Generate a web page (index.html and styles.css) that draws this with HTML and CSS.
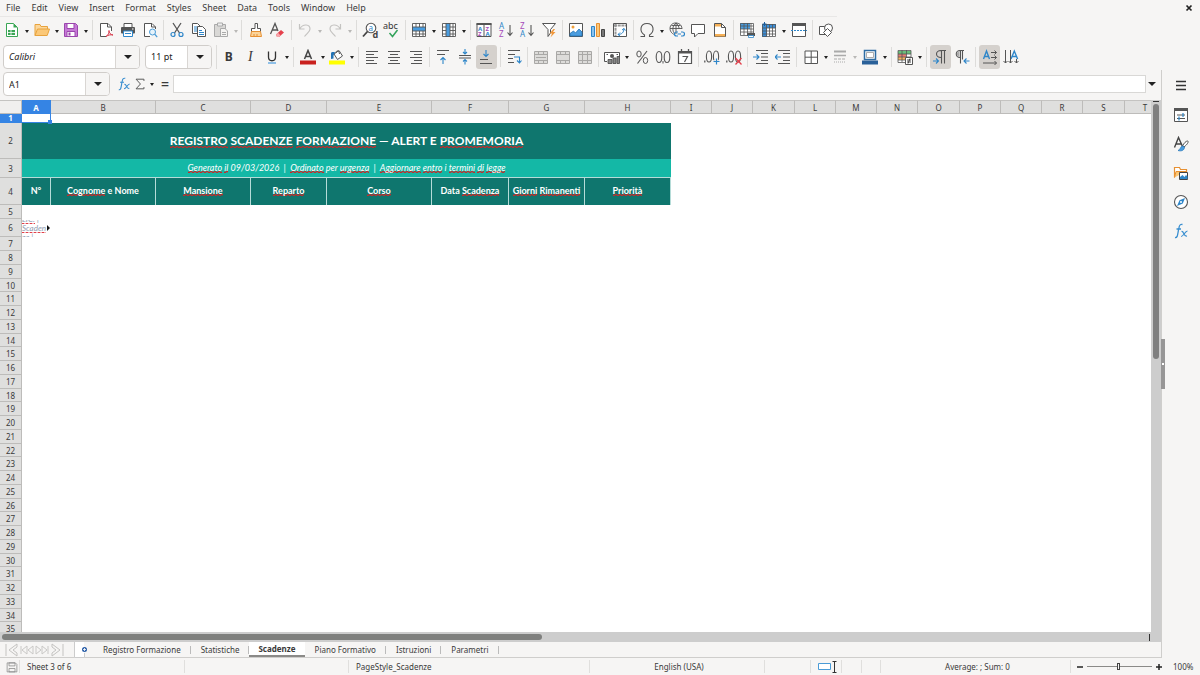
FILE: index.html
```html
<!DOCTYPE html>
<html lang="en">
<head>
<meta charset="utf-8">
<title>Scadenze</title>
<link rel="stylesheet" href="styles.css">
</head>
<body>
<svg class="defs" aria-hidden="true">
  <symbol id="new" viewBox="0 0 16 16"><path d="M2.500 1.500h7l4 4v9h-11z" fill="#fff" stroke="#3aa655"/><path d="M9.500 1.500v4h4z" fill="#3aa655"/><path d="M4 8h7v5H4z" fill="#3aa655"/><path d="M4 10.500h7M7 8v5" stroke="#fff" stroke-width=".8"/></symbol>
  <symbol id="open" viewBox="0 0 16 16"><path d="M1 13.500v-11h5l1 2h6.500v3" fill="#fcd79b" stroke="#e8a33d"/><path d="M1 13.500l2.500-6.500h12l-2.300 6.500z" fill="#fbc878" stroke="#e8a33d"/></symbol>
  <symbol id="save" viewBox="0 0 16 16"><path d="M1.500 1.500h11l2 2v11h-13z" fill="#c67ad6" stroke="#9b46ad"/><path d="M4 1.500h7v5H4z" fill="#fff" stroke="#9b46ad"/><path d="M4 9.500h8v5H4z" fill="#fff" stroke="#9b46ad"/><path d="M5.500 10.500h2v3h-2z" fill="#9b46ad"/></symbol>
  <symbol id="pdf" viewBox="0 0 16 16"><path d="M13.500 9V5L10 1.500H2.500v13H8" fill="#fff" stroke="#555"/><path d="M9.500 1.500V5h4" fill="none" stroke="#555"/><path d="M8 14.500c2-1 3.500-4 3-6-.6 2 2 4.500 4 4.500-2-.6-5 0-7 1.500z" fill="none" stroke="#d8394b"/></symbol>
  <symbol id="print" viewBox="0 0 16 16"><path d="M4 1.500h8v4H4z" fill="#fff" stroke="#555"/><rect x="1" y="5" width="14" height="6.500" rx="1" fill="#555"/><path d="M3.500 9h9v5.500h-9z" fill="#fff" stroke="#2e86c9"/><path d="M5 11.500h6" stroke="#2e86c9"/><path d="M12 7h1.500" stroke="#fff"/></symbol>
  <symbol id="preview" viewBox="0 0 16 16"><path d="M13.500 7V5L10 1.500H2.500v13H8" fill="#fff" stroke="#555"/><path d="M9.500 1.500V5h4" fill="none" stroke="#555"/><circle cx="10.500" cy="10" r="3" fill="#e6f3fb" stroke="#4a9bd6"/><path d="M12.700 12.200l2.500 3" stroke="#4a9bd6" stroke-width="1.300"/></symbol>
  <symbol id="cut" viewBox="0 0 16 16"><path d="M4 1l6.500 10M12 1L5.500 11" stroke="#555" stroke-width="1.300"/><circle cx="4" cy="12.500" r="2" fill="none" stroke="#2e86c9" stroke-width="1.200"/><circle cx="12" cy="12.500" r="2" fill="none" stroke="#2e86c9" stroke-width="1.200"/></symbol>
  <symbol id="copy" viewBox="0 0 16 16"><path d="M1.500 1.500h5l3 3v7h-8z" fill="#fff" stroke="#555"/><path d="M3 5h3M3 7h3M3 9h3" stroke="#2e86c9"/><path d="M6.500 4.500h5l3 3v7h-8z" fill="#fff" stroke="#555"/><path d="M8 8.500h3M8 10.500h5M8 12.500h5" stroke="#2e86c9"/></symbol>
  <symbol id="paste" viewBox="0 0 16 16"><path d="M1.500 2.500h11v12h-11z" fill="#d9d8d6" stroke="#aaa"/><path d="M4.500 1h5v3h-5z" fill="#eee" stroke="#aaa"/><path d="M7.500 6.500H12l2.500 2.500v5.500h-7z" fill="#f5f4f2" stroke="#aaa"/><path d="M9 10.500h4M9 12.500h4" stroke="#aaa"/></symbol>
  <symbol id="brush" viewBox="0 0 16 16"><path d="M7 1.500h2.500v5h3v3h-9v-3H7z" fill="#fff" stroke="#555"/><path d="M3.500 9.500h9l1 5h-11z" fill="#fbd49a" stroke="#e79032"/><path d="M6 12v2.500M9 12v2.500" stroke="#e79032"/></symbol>
  <symbol id="clear" viewBox="0 0 16 16"><path d="M1.500 12L6 1.500 9 9M3.500 8h5" fill="none" stroke="#555" stroke-width="1.300"/><path d="M7 12.500l5-4.500 3 2.500-5 4.500H8z" fill="#e5404c"/><path d="M7 12.500l2-1.700 2.500 2.700L10 15H8z" fill="#f7a6ab"/></symbol>
  <symbol id="undo" viewBox="0 0 16 16"><path d="M2.500 2v5h5M3 6.500C6 1.500 13 2 13 7c0 3-3 4-5.500 7.500" fill="none" stroke="#c4c3c1" stroke-width="1.200"/></symbol>
  <symbol id="redo" viewBox="0 0 16 16"><path d="M13.500 2v5h-5M13 6.500C10 1.500 3 2 3 7c0 3 3 4 5.500 7.500" fill="none" stroke="#c4c3c1" stroke-width="1.200"/></symbol>
  <symbol id="row" viewBox="0 0 16 16"><path d="M1.500 1.500h13v13h-13z" fill="#fff"/><path d="M1 5h14v4H1z" fill="#4a9de0"/><path d="M1.500 1.500h13v13h-13zM1.500 5h13M1.500 9h13M1.500 12h13M5 1v4M8.500 1v4M12 1v4M5 9v5M8.500 9v5M12 9v5" fill="none" stroke="#555" stroke-width=".9"/></symbol>
  <symbol id="col" viewBox="0 0 16 16"><path d="M1.500 1.500h13v13h-13z" fill="#fff"/><path d="M5 1h4v14H5z" fill="#4a9de0"/><path d="M1.500 1.500h13v13h-13zM5 1v14M9 1v14M12 1v14M1 5h4M1 8.500h4M1 12h4M9 5h5M9 8.500h5M9 12h5" fill="none" stroke="#555" stroke-width=".9"/></symbol>
  <symbol id="filter" viewBox="0 0 16 16"><path d="M1.500 1.500h13l-5 6V11L7 14.500v-7z" fill="#fff" stroke="#555"/><path d="M12.500 7L8.500 11.500h2.500l-1.500 4 5-5.500h-2.500l2-3z" fill="#f0973a"/></symbol>
  <symbol id="image" viewBox="0 0 16 16"><path d="M1.500 1.500h13v13h-13z" fill="#fff" stroke="#555"/><circle cx="5" cy="5" r="1.500" fill="#f0a03a"/><path d="M2 14v-2.500L5.500 9l2 2 3.500-4 3 3v4z" fill="#4a9de0" stroke="#2272b4" stroke-width=".8"/></symbol>
  <symbol id="chart" viewBox="0 0 16 16"><path d="M1.500 4.500h3v10h-3z" fill="#8cc3ee" stroke="#2e86c9"/><path d="M6.500 1.500h3v13h-3z" fill="#fbc878" stroke="#e79032"/><path d="M11.500 7.500h3v7h-3z" fill="#777" stroke="#444"/></symbol>
  <symbol id="pivot" viewBox="0 0 16 16"><path d="M1.500 1.500h13v13h-13z" fill="#fff" stroke="#555"/><path d="M2 3.500h12M3.500 2v12" stroke="#999" stroke-width="2" stroke-dasharray="3 .7"/><path d="M6 12.500c3.500 0 6-2 6-6M6 12.500l2-2M6 12.500l2 1.500M12 6.500l-2 1.500M12 6.500l1.500 2" fill="none" stroke="#2e86c9"/></symbol>
  <symbol id="omega" viewBox="0 0 16 16"><path d="M1.500 14.500h4V13C0 9.500 1 1.500 8 1.500s8 8 2.500 11.500v1.500h4" fill="none" stroke="#555" stroke-width="1.100"/></symbol>
  <symbol id="link" viewBox="0 0 16 16"><path d="M13 7C13-1 1-1 1 6.500 1 10 4 12.500 6 12.500M1 6.500h12M2.500 3.500h9M7 1C3 4 3 9 6 12M7 1c2 1.500 3 3.500 3 6M7 1v11" fill="none" stroke="#555" stroke-width=".9"/><path d="M9 10H7.500a2 2 0 0 0 0 4H9m3-4h1.500a2 2 0 0 1 0 4H12m-3.500-2H12" fill="none" stroke="#2e86c9" stroke-width="1.200"/></symbol>
  <symbol id="comment" viewBox="0 0 16 16"><path d="M1.500 2.500h13v9H8L4.500 15v-3.500h-3z" fill="#fff" stroke="#555"/></symbol>
  <symbol id="header" viewBox="0 0 16 16"><path d="M2.500 1.500h7l4 4v9h-11z" fill="#fff" stroke="#555"/><path d="M3 2h6v2.500H3zM3 12h10v2.500H3z" fill="#f5b057"/><path d="M9.500 1.500v4h4" fill="none" stroke="#555"/></symbol>
  <symbol id="printarea" viewBox="0 0 16 16"><path d="M1.500 1.500h13v12h-13z" fill="#fff"/><path d="M1 1h10v6H1z" fill="#4a9de0"/><path d="M1.500 1.500h13v12h-13zM1.500 4h13M1.500 7h13M1.500 10h13M5 1v12M8.500 1v12M12 1v12" fill="none" stroke="#555" stroke-width=".8"/><path d="M8 11h8v3H8z" fill="#555"/><path d="M9.500 13.500h5v2h-5z" fill="#fff" stroke="#2e86c9" stroke-width=".8"/></symbol>
  <symbol id="freeze" viewBox="0 0 16 16"><path d="M1.500 2.500h13v12h-13z" fill="#fff"/><path d="M1 2h14v4H6v9H1z" fill="#3b8fd9"/><path d="M1.500 2.500h13v12h-13zM1.500 6h13M1.500 9h13M1.500 12h13M5.500 2v12M8.500 2v12M11.500 2v12" fill="none" stroke="#555" stroke-width=".8"/><path d="M3.500 0v4M1.500 2h4" stroke="#1c5f9e"/></symbol>
  <symbol id="split" viewBox="0 0 16 16"><path d="M1.500 1.500h13v13h-13z" fill="#fff" stroke="#555"/><path d="M1 1h14v3H1z" fill="#555"/><path d="M0 8.500h16" stroke="#2e86c9" stroke-dasharray="2 1"/></symbol>
  <symbol id="shapes" viewBox="0 0 16 16"><path d="M1.500 4.500h7v8h-7z" fill="#fff" stroke="#555"/><circle cx="10.500" cy="6" r="4" fill="#fff" stroke="#555"/><path d="M9.500 6.500l4 4-4 4-4-4z" fill="#fff" stroke="#555"/></symbol>

  <symbol id="underline" viewBox="0 0 16 16"><path d="M4.500 2.500V8c0 5 7 5 7 0V2.500" fill="none" stroke="#333" stroke-width="1.300"/><path d="M4 14h8" stroke="#4a9de0" stroke-width="1.200"/></symbol>
  <symbol id="fontcolor" viewBox="0 0 16 16"><path d="M4.500 10L8 1.500l3.500 8.500M5.500 7.500h5" fill="none" stroke="#444" stroke-width="1.500"/><path d="M0 11.500h16v4H0z" fill="#c9211e"/></symbol>
  <symbol id="highlight" viewBox="0 0 16 16"><path d="M0 11.500h16v4H0z" fill="#ff0"/><path d="M5 5l5-3.500 3.500 5.500-5 3.500z" fill="#fff" stroke="#555"/><path d="M7 4c0-3 3-3 3.500 1" fill="none" stroke="#555"/><path d="M2 10V4.500c0-2 2-1.500 4-1.500L4.500 6.500v3z" fill="#2272b4"/></symbol>
  <symbol id="left" viewBox="0 0 16 16"><path d="M2 2.500h12M2 5.500h8M2 8.500h12M2 11.500h8M2 14.500h11" stroke="#555" stroke-width="1.100"/></symbol>
  <symbol id="center" viewBox="0 0 16 16"><path d="M2 2.500h12M4 5.500h8M2 8.500h12M4 11.500h8M2 14.500h12" stroke="#555" stroke-width="1.100"/></symbol>
  <symbol id="right" viewBox="0 0 16 16"><path d="M2 2.500h12M6 5.500h8M2 8.500h12M6 11.500h8M3 14.500h11" stroke="#555" stroke-width="1.100"/></symbol>
  <symbol id="top" viewBox="0 0 16 16"><path d="M2 1.500h12M2 5.500h8" stroke="#555"/><path d="M8 15V8.500M5.500 11L8 8.500l2.500 2.500" fill="none" stroke="#2e86c9" stroke-width="1.100"/></symbol>
  <symbol id="middle" viewBox="0 0 16 16"><path d="M2 6.500h12M2 9h12" stroke="#555"/><path d="M8 0v5M6 3l2 2 2-2M8 15.500v-5M6 12.500l2-2 2 2" fill="none" stroke="#2e86c9" stroke-width="1.100"/></symbol>
  <symbol id="bottom" viewBox="0 0 16 16"><path d="M2 10.500h8M2 14.500h12" stroke="#555"/><path d="M8 1v6.500M5.500 5L8 7.500 10.500 5" fill="none" stroke="#2e86c9" stroke-width="1.100"/></symbol>
  <symbol id="wrap" viewBox="0 0 16 16"><path d="M2 1.500h12M2 5.500h7M2 9.500h5M2 13.500h6" stroke="#555"/><path d="M8 8h5.500v5.500M11 11.500l2.500 2.500 2-2.500" fill="none" stroke="#2e86c9" stroke-width="1.100"/></symbol>
  <symbol id="merge" viewBox="0 0 16 16"><path d="M1.500 2.500h13v12h-13z" fill="#dddcda"/><path d="M1.500 2.500h13v12h-13zM1.500 5.500h13M1.500 11.500h13M5.500 2v3M10.500 2v3M5.500 12v3M10.500 12v3M3 8.500h10" fill="none" stroke="#a9a8a6"/></symbol>
  <symbol id="merge2" viewBox="0 0 16 16"><path d="M1.500 2.500h13v12h-13z" fill="#dddcda"/><path d="M1.500 2.500h13v12h-13zM1.500 5.500h13M1.500 11.500h13M5.500 2v3M10.500 2v3M5.500 12v3M10.500 12v3" fill="none" stroke="#a9a8a6"/></symbol>
  <symbol id="merge3" viewBox="0 0 16 16"><path d="M1.500 2.500h13v12h-13z" fill="#dddcda"/><path d="M1.500 2.500h13v12h-13zM1.500 5.500h13M1.500 11.500h13M5.500 2v12M10.500 2v12" fill="none" stroke="#a9a8a6"/></symbol>
  <symbol id="currency" viewBox="0 0 16 16"><path d="M3 12.500H.5v-9h15V8" fill="#fff" stroke="#555"/><circle cx="8" cy="7" r="2" fill="#555"/><path d="M2.500 5.500h1.500M12.500 5.500H14" stroke="#555"/><path d="M4 10.500h4v4H4zM9 9h3v5.500H9zM13 7.500h2.500v7H13z" fill="#888" stroke="#444" stroke-width=".8"/></symbol>
  <symbol id="percent" viewBox="0 0 16 16"><path d="M13 2L3.500 14.500" stroke="#555" stroke-width="1.100"/><ellipse cx="5" cy="5" rx="2.200" ry="3" fill="none" stroke="#555"/><ellipse cx="11.500" cy="11.500" rx="2.200" ry="3" fill="none" stroke="#555"/></symbol>
  <symbol id="number" viewBox="0 0 16 16"><ellipse cx="4" cy="8" rx="2.800" ry="5.500" fill="none" stroke="#555" stroke-width="1.100"/><ellipse cx="12" cy="8" rx="2.800" ry="5.500" fill="none" stroke="#555" stroke-width="1.100"/><path d="M8 12v2.500" stroke="#555"/></symbol>
  <symbol id="date" viewBox="0 0 16 16"><path d="M1.500 2.500h13v12h-13z" fill="#fff" stroke="#555" stroke-width="1.200"/><path d="M1 3.500h14" stroke="#555" stroke-width="2"/><path d="M4.500 0v3M11.500 0v3" stroke="#555" stroke-width="1.300"/><path d="M5.500 7.500h5l-3 5.500" fill="none" stroke="#555" stroke-width="1.200"/></symbol>
  <symbol id="adddec" viewBox="0 0 16 16"><path d="M.8 11.500v2" stroke="#555" stroke-width="1.300"/><ellipse cx="5" cy="7.500" rx="2.600" ry="5.500" fill="none" stroke="#555" stroke-width="1.100"/><ellipse cx="12" cy="7.500" rx="2.600" ry="5.500" fill="none" stroke="#555" stroke-width="1.100"/><path d="M12.500 9v6.500M9 12.500h7" stroke="#f6f5f4" stroke-width="2.500"/><path d="M12.500 9.500v6M9.500 12.500h6" stroke="#2e86c9" stroke-width="1.200"/></symbol>
  <symbol id="deldec" viewBox="0 0 16 16"><path d="M.8 11.500v2" stroke="#555" stroke-width="1.300"/><ellipse cx="5" cy="7.500" rx="2.600" ry="5.500" fill="none" stroke="#555" stroke-width="1.100"/><ellipse cx="12" cy="7.500" rx="2.600" ry="5.500" fill="none" stroke="#555" stroke-width="1.100"/><path d="M9.500 9l6 6.500M15.500 9l-6 6.500" stroke="#e5404c" stroke-width="1.300"/></symbol>
  <symbol id="indent" viewBox="0 0 16 16"><path d="M3 1.500h12M8 4.500h7M8 8h7M8 11.500h7M3 14.500h12" stroke="#555"/><path d="M0 8h6M3.500 5.500L6 8l-2.500 2.500" fill="none" stroke="#2e86c9" stroke-width="1.100"/></symbol>
  <symbol id="outdent" viewBox="0 0 16 16"><path d="M3 1.500h12M8 4.500h7M8 8h7M8 11.500h7M3 14.500h12" stroke="#555"/><path d="M6 8H0M2.500 5.500L0 8l2.500 2.500" fill="none" stroke="#2e86c9" stroke-width="1.100"/></symbol>
  <symbol id="borders" viewBox="0 0 16 16"><path d="M2 2h12.500v12.500H2zM8.200 2v12.500M2 8.200h12.500" fill="#fff" stroke="#555"/></symbol>
  <symbol id="linestyle" viewBox="0 0 16 16"><path d="M2 2.500h12" stroke="#aaa" stroke-width="2"/><path d="M2 6.500h12" stroke="#aaa" stroke-width="1.500"/><path d="M2 10h12" stroke="#aaa" stroke-dasharray="3 1"/><path d="M2 13h12" stroke="#aaa" stroke-dasharray="1 1"/></symbol>
  <symbol id="linecolor" viewBox="0 0 16 16"><path d="M2.500 1.500h11v9h-11z" fill="#fff" stroke="#2e6da4" stroke-width="1.500"/><path d="M4.500 3.500h7v5h-7z" fill="none" stroke="#999" stroke-width=".8"/><path d="M0 11.500h16v4H0z" fill="#2a6099"/></symbol>
  <symbol id="cond" viewBox="0 0 16 16"><path d="M1 1.500h13v12H1z" fill="#fff"/><path d="M1 2h13v3H1z" fill="#6abf7b"/><path d="M1 5h8v3H1z" fill="#e77c74"/><path d="M1 8h8v3H1z" fill="#f7b560"/><path d="M1 1.500h13v12H1zM1 5h13M1 8h13M1 11h13M5 1v12M9.500 1v12" fill="none" stroke="#555" stroke-width=".8"/><path d="M8.500 8.500h7v7h-7z" fill="#fff" stroke="#555"/><path d="M10 11h4M10 13h4M13 9.500l-2 5" stroke="#333" stroke-width=".9"/></symbol>
  <symbol id="ltr" viewBox="0 0 16 16"><path d="M9 8.500C3 8.500 3 1.500 9 1.500h5M9.500 1.500v13M12.500 1.500v13" fill="none" stroke="#555" stroke-width="1.100"/><path d="M1 12h5M4 9.500L6.500 12 4 14.500" fill="none" stroke="#2e86c9" stroke-width="1.100"/></symbol>
  <symbol id="rtl" viewBox="0 0 16 16"><path d="M6 8.500C1 8.500 1 1.500 6 1.500h4M6.500 1.500v13M8.500 1.500v9" fill="none" stroke="#555" stroke-width="1.100"/><path d="M5.500 2v6C2 8 2 2 5.500 2z" fill="#aaa"/><path d="M15.500 12h-5M12.500 9.500L10 12l2.500 2.500" fill="none" stroke="#2e86c9" stroke-width="1.100"/></symbol>
  <symbol id="horiz" viewBox="0 0 16 16"><path d="M1.500 10L4.500 2l3 8M2.500 7.500h4" fill="none" stroke="#2e86c9" stroke-width="1.400"/><path d="M9 3.500h5.500M12.500 1.500l2 2-2 2M9 8.500h5.500M12.500 6.500l2 2-2 2M1 14h13.500M12.500 12l2 2-2 2" fill="none" stroke="#555"/></symbol>
  <symbol id="vert" viewBox="0 0 16 16"><path d="M8 10l3.300-8 3.300 8M9 7.500h4.500" fill="none" stroke="#2e86c9" stroke-width="1.400"/><path d="M2.500 1v13M.5 12l2 2 2-2M7.500 1v13M5.500 12l2 2 2-2M13.500 10v4M11.500 12l2 2 2-2" fill="none" stroke="#555"/></symbol>
  <symbol id="fx" viewBox="0 0 16 16"><path d="M2 14.500c3 .5 2.500-3.500 4-10C6.500 2 7.500 1 9.500 1.500M3.500 6h4.500" fill="none" stroke="#3a8fd0" stroke-width="1.300"/><path d="M8.500 8.500c2.500-1 2 5.500 5.500 4.500M14.500 8c-2.500 0-4 5.500-6.500 5.500" fill="none" stroke="#3a8fd0" stroke-width="1.200"/></symbol>
  <symbol id="sum" viewBox="0 0 16 16"><path d="M12.500 4.500v-2h-9L8.500 8l-5 5.500h9v-2" fill="none" stroke="#555" stroke-width="1.100"/></symbol>
  <symbol id="burger" viewBox="0 0 16 16"><path d="M3 3.500h10M3 7.500h10M3 11.500h10" stroke="#333" stroke-width="1.500"/></symbol>
  <symbol id="props" viewBox="0 0 16 16"><path d="M1.500 1.500h13v13h-13z" fill="#fff" stroke="#555"/><path d="M1 1h14v3H1z" fill="#555"/><path d="M4 8h8M4 11.500h8" stroke="#555"/><path d="M10 6v4M6 9.500v4" stroke="#2e86c9" stroke-width="1.200"/></symbol>
  <symbol id="styles" viewBox="0 0 16 16"><path d="M1.500 11.500L5.500 1.500l4 9M3 8h5.500" fill="none" stroke="#444" stroke-width="1.400"/><path d="M14.500 5c1.500 0 .5 3-3.500 6l-1.500-1c1.500-3 3.500-5 5-5z" fill="#fff" stroke="#555"/><path d="M10 10c-3 0-2 3.500-5 4.500 3 1 6.500 0 6.500-3.500z" fill="#4a9de0" stroke="#2272b4" stroke-width=".7"/></symbol>
  <symbol id="gallery" viewBox="0 0 16 16"><path d="M1.500 12.500v-10h5l1 2h6v3" fill="#fff" stroke="#e79032" stroke-width="1.200"/><path d="M1.500 12.500l1.500-6h10" fill="#fbc878" stroke="#e79032"/><path d="M6.500 7.500h8v7h-8z" fill="#fff" stroke="#444"/><path d="M7 14v-2l2.500-2 2 2 1.500-2 1.500 1.500V14z" fill="#2e86c9"/></symbol>
  <symbol id="compass" viewBox="0 0 16 16"><circle cx="8" cy="8" r="6.500" fill="#fff" stroke="#555" stroke-width="1.100"/><path d="M12 4L9.800 9.500 4 12l2.500-5.800z" fill="#2e86c9"/><circle cx="8" cy="8" r="1" fill="#fff"/></symbol>
  <symbol id="disk" viewBox="0 0 16 16"><path d="M1.500 2.500h11l2 2v10h-13zM4 2.500h8v4H4zM4 10h8v4.500H4z" fill="none" stroke="#888"/></symbol>
  <symbol id="nfirst" viewBox="0 0 14 14"><path d="M1 1v12M12 1L4 7l8 6v-3L8 7l4-3z" fill="none" stroke="#c4c3c1"/></symbol>
  <symbol id="nprev" viewBox="0 0 14 14"><path d="M1 3v8M7 3L2 7l5 4zM13 3L8 7l5 4z" fill="none" stroke="#c9c8c6"/></symbol>
  <symbol id="nnext" viewBox="0 0 14 14"><path d="M1 3l5 4-5 4zM7 3l5 4-5 4zM13 3v8" fill="none" stroke="#c9c8c6"/></symbol>
  <symbol id="nlast" viewBox="0 0 14 14"><path d="M13 1v12M2 1l8 6-8 6v-3l4-3-4-3z" fill="none" stroke="#c4c3c1"/></symbol>
  <symbol id="addsheet" viewBox="0 0 16 16"><path d="M1.500 0v15.500h10V11" fill="#fff" stroke="#ccc"/><path d="M2 0h9v15H2z" fill="#fff"/><circle cx="11.500" cy="7.500" r="2.500" fill="#2a5ea8"/><path d="M11.500 6v3M10 7.500h3" stroke="#fff" stroke-width=".8"/></symbol>
</svg>

<div class="app">
  <header class="menubar">
    <nav class="menus">
      <button>File</button><button>Edit</button><button>View</button><button>Insert</button><button>Format</button><button>Styles</button><button>Sheet</button><button>Data</button><button>Tools</button><button>Window</button><button>Help</button>
    </nav>
    <button class="close" aria-label="Close"><svg viewBox="0 0 8 8"><path d="M1.500 1.500l5 5M6.500 1.500l-5 5" stroke="#222" stroke-width="1.700"/></svg></button>
  </header>

  <div class="toolbar standard">
    <button class="tool drop" aria-label="New"><svg><use href="#new"/></svg><i></i></button>
    <button class="tool drop" aria-label="Open"><svg><use href="#open"/></svg><i></i></button>
    <button class="tool drop" aria-label="Save"><svg><use href="#save"/></svg><i></i></button>
    <span class="sep"></span>
    <button class="tool" aria-label="Export PDF"><svg><use href="#pdf"/></svg></button>
    <button class="tool" aria-label="Print"><svg><use href="#print"/></svg></button>
    <button class="tool" aria-label="Print Preview"><svg><use href="#preview"/></svg></button>
    <span class="sep"></span>
    <button class="tool" aria-label="Cut"><svg><use href="#cut"/></svg></button>
    <button class="tool" aria-label="Copy"><svg><use href="#copy"/></svg></button>
    <button class="tool drop off" aria-label="Paste"><svg><use href="#paste"/></svg><i></i></button>
    <span class="sep"></span>
    <button class="tool" aria-label="Clone"><svg><use href="#brush"/></svg></button>
    <button class="tool" aria-label="Clear"><svg><use href="#clear"/></svg></button>
    <span class="sep"></span>
    <button class="tool drop off" aria-label="Undo"><svg><use href="#undo"/></svg><i></i></button>
    <button class="tool drop off" aria-label="Redo"><svg><use href="#redo"/></svg><i></i></button>
    <span class="sep"></span>
    <button class="tool" aria-label="Find"><svg viewBox="0 0 16 16"><circle cx="9" cy="6" r="4.800" fill="#fff" stroke="#555" stroke-width="1.100"/><path d="M5.500 9.500L1 14.500" stroke="#444" stroke-width="1.800"/><text x="6.500" y="8.500" font-size="8" fill="#2e86c9">a</text><text x="10.500" y="15.500" font-size="9" font-weight="bold" fill="#444">d</text></svg></button>
    <button class="tool" aria-label="Spelling"><svg viewBox="0 0 16 16"><text x="0" y="7" font-size="9" fill="#333">abc</text><path d="M6.500 11l3 3.500 5-6.500" fill="none" stroke="#33a35b" stroke-width="1.500"/></svg></button>
    <span class="sep"></span>
    <button class="tool drop" aria-label="Row"><svg><use href="#row"/></svg><i></i></button>
    <button class="tool drop" aria-label="Column"><svg><use href="#col"/></svg><i></i></button>
    <span class="sep"></span>
    <button class="tool" aria-label="Sort"><svg viewBox="0 0 16 16"><path d="M1 1.500h14v13H1zM8 2v12" fill="#fff" stroke="#555"/><path d="M.5 1h15v2H.5z" fill="#555"/><g font-size="6" font-weight="bold"><text x="2" y="9" fill="#2e86c9">A</text><text x="2" y="14" fill="#a64ab9">Z</text><text x="9.500" y="9" fill="#a64ab9">Z</text><text x="9.500" y="14" fill="#2e86c9">A</text></g></svg></button>
    <button class="tool" aria-label="Sort Ascending"><svg viewBox="0 0 16 16"><g font-size="8"><text x="1" y="7" fill="#2e86c9">A</text><text x="1" y="15" fill="#a64ab9">Z</text></g><path d="M12 3v10M9.500 10.500L12 13.300l2.500-2.800" fill="none" stroke="#555" stroke-width="1.100"/></svg></button>
    <button class="tool" aria-label="Sort Descending"><svg viewBox="0 0 16 16"><g font-size="8"><text x="1" y="7" fill="#a64ab9">Z</text><text x="1" y="15" fill="#2e86c9">A</text></g><path d="M12 3v10M9.500 10.500L12 13.300l2.500-2.800" fill="none" stroke="#555" stroke-width="1.100"/></svg></button>
    <button class="tool" aria-label="AutoFilter"><svg><use href="#filter"/></svg></button>
    <span class="sep"></span>
    <button class="tool" aria-label="Image"><svg><use href="#image"/></svg></button>
    <button class="tool" aria-label="Chart"><svg><use href="#chart"/></svg></button>
    <button class="tool" aria-label="Pivot Table"><svg><use href="#pivot"/></svg></button>
    <span class="sep"></span>
    <button class="tool drop" aria-label="Special Character"><svg><use href="#omega"/></svg><i></i></button>
    <button class="tool" aria-label="Hyperlink"><svg><use href="#link"/></svg></button>
    <button class="tool" aria-label="Comment"><svg><use href="#comment"/></svg></button>
    <button class="tool" aria-label="Headers and Footers"><svg><use href="#header"/></svg></button>
    <span class="sep"></span>
    <button class="tool" aria-label="Print Area"><svg><use href="#printarea"/></svg></button>
    <button class="tool drop" aria-label="Freeze"><svg><use href="#freeze"/></svg><i></i></button>
    <button class="tool" aria-label="Split Window"><svg><use href="#split"/></svg></button>
    <span class="sep"></span>
    <button class="tool" aria-label="Draw Functions"><svg><use href="#shapes"/></svg></button>
  </div>

  <div class="formatting">
    <div class="combo font"><input aria-label="Font Name" value="Calibri"><button aria-label="Fonts"><i></i></button></div>
    <div class="combo size"><input aria-label="Font Size" value="11 pt"><button aria-label="Sizes"><i></i></button></div>
    <div class="toolbar format">
      <button class="tool letter bold">B</button>
      <button class="tool letter ital">I</button>
      <button class="tool drop" aria-label="Underline"><svg><use href="#underline"/></svg><i></i></button>
      <span class="sep"></span>
      <button class="tool drop" aria-label="Font Color"><svg><use href="#fontcolor"/></svg><i></i></button>
      <button class="tool drop" aria-label="Highlighting"><svg><use href="#highlight"/></svg><i></i></button>
      <span class="sep"></span>
      <button class="tool" aria-label="Align Left"><svg><use href="#left"/></svg></button>
      <button class="tool" aria-label="Center"><svg><use href="#center"/></svg></button>
      <button class="tool" aria-label="Align Right"><svg><use href="#right"/></svg></button>
      <span class="sep"></span>
      <button class="tool" aria-label="Align Top"><svg><use href="#top"/></svg></button>
      <button class="tool" aria-label="Center Vertically"><svg><use href="#middle"/></svg></button>
      <button class="tool active" aria-label="Align Bottom"><svg><use href="#bottom"/></svg></button>
      <span class="sep"></span>
      <button class="tool" aria-label="Wrap Text"><svg><use href="#wrap"/></svg></button>
      <span class="sep"></span>
      <button class="tool" aria-label="Merge and Center"><svg><use href="#merge"/></svg></button>
      <button class="tool" aria-label="Merge"><svg><use href="#merge2"/></svg></button>
      <button class="tool" aria-label="Unmerge"><svg><use href="#merge3"/></svg></button>
      <span class="sep"></span>
      <button class="tool drop" aria-label="Currency"><svg><use href="#currency"/></svg><i></i></button>
      <button class="tool" aria-label="Percent"><svg><use href="#percent"/></svg></button>
      <button class="tool" aria-label="Number"><svg><use href="#number"/></svg></button>
      <button class="tool" aria-label="Date"><svg><use href="#date"/></svg></button>
      <span class="sep"></span>
      <button class="tool" aria-label="Add Decimal"><svg><use href="#adddec"/></svg></button>
      <button class="tool" aria-label="Delete Decimal"><svg><use href="#deldec"/></svg></button>
      <span class="sep"></span>
      <button class="tool" aria-label="Increase Indent"><svg><use href="#indent"/></svg></button>
      <button class="tool" aria-label="Decrease Indent"><svg><use href="#outdent"/></svg></button>
      <span class="sep"></span>
      <button class="tool drop" aria-label="Borders"><svg><use href="#borders"/></svg><i></i></button>
      <button class="tool drop off" aria-label="Border Style"><svg><use href="#linestyle"/></svg><i></i></button>
      <button class="tool drop" aria-label="Border Color"><svg><use href="#linecolor"/></svg><i></i></button>
      <span class="sep"></span>
      <button class="tool drop" aria-label="Conditional"><svg><use href="#cond"/></svg><i></i></button>
      <span class="sep"></span>
      <button class="tool active" aria-label="Left-To-Right"><svg><use href="#ltr"/></svg></button>
      <button class="tool" aria-label="Right-To-Left"><svg><use href="#rtl"/></svg></button>
      <span class="sep"></span>
      <button class="tool active" aria-label="Horizontal Text"><svg><use href="#horiz"/></svg></button>
      <button class="tool" aria-label="Vertical Text"><svg><use href="#vert"/></svg></button>
    </div>
  </div>

  <div class="body">
    <main class="work">
      <div class="formula">
        <div class="combo name"><input aria-label="Name Box" value="A1"><button aria-label="Names"><i></i></button></div>
        <button class="fbtn" aria-label="Function Wizard"><svg><use href="#fx"/></svg></button>
        <button class="fbtn sum" aria-label="Select Function"><svg><use href="#sum"/></svg><i></i></button>
        <button class="fbtn eq">=</button>
        <input class="line" aria-label="Input line">
        <button class="expand" aria-label="Expand"><i></i></button>
      </div>
      <div class="view">
        <div class="sheet">
          <table>
            <colgroup><col class="c0"><col class="ca"><col class="cb"><col class="cc"><col class="cd"><col class="cb"><col class="cf"><col class="cg"><col class="ch"><col class="ci" span="2"><col class="cj"><col class="ci" span="3"><col class="cj"><col class="ci" span="3"><col class="cj"><col class="ci"></colgroup>
            <thead><tr><th class="corner"></th><th class="sel">A</th><th>B</th><th>C</th><th>D</th><th>E</th><th>F</th><th>G</th><th>H</th><th>I</th><th>J</th><th>K</th><th>L</th><th>M</th><th>N</th><th>O</th><th>P</th><th>Q</th><th>R</th><th>S</th><th>T</th></tr></thead>
            <tbody>
              <tr class="r1"><th class="sel">1</th><td class="cursor"><span class="handle"></span></td><td colspan="19"></td></tr>
              <tr class="r2"><th>2</th><td class="title" colspan="8"><u>REGISTRO</u> <u>SCADENZE</u> <u>FORMAZIONE</u> — ALERT E <u>PROMEMORIA</u></td><td colspan="12"></td></tr>
              <tr class="r3"><th>3</th><td class="subtitle" colspan="8"><u>Generato</u> <u>il</u> 09/03/2026 &nbsp;|&nbsp; <u>Ordinato</u> per <u>urgenza</u> &nbsp;|&nbsp; <u>Aggiornare</u> <u>entro</u> i <u>termini</u> <u>di</u> <u>legge</u></td><td colspan="12"></td></tr>
              <tr class="r4"><th>4</th><td class="head">N°</td><td class="head"><u>Cognome</u> e Nome</td><td class="head"><u>Mansione</u></td><td class="head"><u>Reparto</u></td><td class="head"><u>Corso</u></td><td class="head">Data <u>Scadenza</u></td><td class="head"><u>Giorni</u> <u>Rimanenti</u></td><td class="head"><u>Priorità</u></td><td colspan="12"></td></tr>
              <tr class="r5"><th>5</th><td colspan="20"></td></tr>
              <tr class="r6"><th>6</th><td class="legend"><div class="clip"><div><u>LIC.</u> |<br><u>Scaden</u><br>za |</div></div><i class="more"></i></td><td colspan="19"></td></tr>
            </tbody>
            <tbody class="blank">
              <tr><th>7</th><td colspan="20"></td></tr>
              <tr><th>8</th><td colspan="20"></td></tr>
              <tr><th>9</th><td colspan="20"></td></tr>
              <tr><th>10</th><td colspan="20"></td></tr>
              <tr><th>11</th><td colspan="20"></td></tr>
              <tr><th>12</th><td colspan="20"></td></tr>
              <tr><th>13</th><td colspan="20"></td></tr>
              <tr><th>14</th><td colspan="20"></td></tr>
              <tr><th>15</th><td colspan="20"></td></tr>
              <tr><th>16</th><td colspan="20"></td></tr>
              <tr><th>17</th><td colspan="20"></td></tr>
              <tr><th>18</th><td colspan="20"></td></tr>
              <tr><th>19</th><td colspan="20"></td></tr>
              <tr><th>20</th><td colspan="20"></td></tr>
              <tr><th>21</th><td colspan="20"></td></tr>
              <tr><th>22</th><td colspan="20"></td></tr>
              <tr><th>23</th><td colspan="20"></td></tr>
              <tr><th>24</th><td colspan="20"></td></tr>
              <tr><th>25</th><td colspan="20"></td></tr>
              <tr><th>26</th><td colspan="20"></td></tr>
              <tr><th>27</th><td colspan="20"></td></tr>
              <tr><th>28</th><td colspan="20"></td></tr>
              <tr><th>29</th><td colspan="20"></td></tr>
              <tr><th>30</th><td colspan="20"></td></tr>
              <tr><th>31</th><td colspan="20"></td></tr>
              <tr><th>32</th><td colspan="20"></td></tr>
              <tr><th>33</th><td colspan="20"></td></tr>
              <tr><th>34</th><td colspan="20"></td></tr>
              <tr><th>35</th><td colspan="20"></td></tr>
            </tbody>
          </table>
        </div>
        <div class="vscroll"><span class="mark"></span><span class="thumb"></span></div>
        <div class="hscroll"><span class="thumb"></span><span class="mark"></span></div>
      </div>
      <div class="tabs">
        <div class="navs">
          <button aria-label="First"><svg><use href="#nfirst"/></svg></button><button aria-label="Previous"><svg><use href="#nprev"/></svg></button><button aria-label="Next"><svg><use href="#nnext"/></svg></button><button aria-label="Last"><svg><use href="#nlast"/></svg></button>
        </div>
        <button class="add" aria-label="Add Sheet"><svg><use href="#addsheet"/></svg></button>
        <button class="tab">Registro Formazione</button>
        <button class="tab">Statistiche</button>
        <button class="tab current">Scadenze</button>
        <button class="tab">Piano Formativo</button>
        <button class="tab">Istruzioni</button>
        <button class="tab">Parametri</button>
      </div>
    </main>
    <aside class="sidebar">
      <span class="grip"></span>
      <button aria-label="Settings"><svg><use href="#burger"/></svg></button>
      <button aria-label="Properties"><svg><use href="#props"/></svg></button>
      <button aria-label="Styles"><svg><use href="#styles"/></svg></button>
      <button aria-label="Gallery"><svg><use href="#gallery"/></svg></button>
      <button aria-label="Navigator"><svg><use href="#compass"/></svg></button>
      <button aria-label="Functions"><svg><use href="#fx"/></svg></button>
    </aside>
  </div>

  <footer class="status">
    <span class="cell disk"><svg><use href="#disk"/></svg></span>
    <span class="cell">Sheet 3 of 6</span>
    <span class="cell"></span>
    <span class="cell">PageStyle_Scadenze</span>
    <span class="cell mid">English (USA)</span>
    <span class="cell"></span>
    <span class="cell mode"><svg viewBox="0 0 20 12"><path d="M.5 2.500h12v6H.5z" fill="#fff" stroke="#4a9bd6"/><path d="M14.500 .5h4M14.500 11.500h4M16.500 .5v11" fill="none" stroke="#333"/></svg></span>
    <span class="cell"></span>
    <span class="cell"></span>
    <span class="cell mid">Average: ; Sum: 0</span>
    <span class="cell zoom"><button aria-label="Zoom Out"><svg viewBox="0 0 8 8"><path d="M1 4h6" stroke="#222" stroke-width="1.500"/></svg></button><input type="range" aria-label="Zoom" min="0" max="100" value="48"><button aria-label="Zoom In"><svg viewBox="0 0 8 8"><path d="M1 4h6M4 1v6" stroke="#222" stroke-width="1.500"/></svg></button><span class="pct">100%</span></span>
  </footer>
</div>
</body>
</html>
```
FILE: styles.css
```css
* { box-sizing: border-box; }
body { margin: 0; background: #f6f5f4; color: #3a3a3a; font: 8px "Noto Sans", sans-serif; }
button, input { margin: 0; padding: 0; border: 0; background: none; color: inherit; font: inherit; border-radius: 0; }
input { outline: 0; min-width: 0; }
svg text { font-family: "Noto Sans", sans-serif; }
.defs { position: absolute; width: 0; height: 0; }
.app { display: flex; flex-direction: column; height: 100vh; overflow: hidden; }

/* menu bar */
.menubar { display: flex; flex: none; justify-content: space-between; align-items: center; height: 16px; padding: 0 7px 0 0; }
.menus { display: flex; font-size: 9px; }
.menus button { padding: 0 5px 0 6px; line-height: 16px; }
.close svg { display: block; width: 8px; height: 8px; }

/* tool bars */
.toolbar { display: flex; align-items: center; height: 27px; }
.standard { flex: none; max-width: 837px; padding-left: 1px; border-top: 1px solid #e8e7e6; }
.formatting { display: flex; flex: none; align-items: center; height: 27px; padding-left: 3px; }
.format { flex: 0 1 806px; height: 24px; margin-left: 4px; padding-left: 1px; border-left: 1px solid #dddcda; }
.tool { display: flex; flex: 0 1 22px; min-width: 0; height: 24px; align-items: center; justify-content: center; border-radius: 3px; }
.tool svg { flex: none; width: 16px; height: 16px; overflow: visible; }
.drop { flex-basis: 30px; gap: 5px; justify-content: flex-start; padding-left: 3px; }
i { display: block; flex: none; width: 0; height: 0; border: solid transparent; border-width: 3px 2px 0; border-top-color: #222; }
.drop i { margin-top: 2px; }
.off i { border-top-color: #b9b8b6; }
.sep { flex: 0 1 6px; height: 20px; background: linear-gradient(#dddcda, #dddcda) center / 1px 100% no-repeat; }
.active { background: #d5d1cd; }
.letter { font: 14px "Liberation Serif", serif; }
.bold { font: bold 12px "Noto Sans", sans-serif; }
.ital { font-style: italic; }

.combo { display: flex; flex: none; height: 24px; border: 1px solid #d0cdca; border-radius: 4px; background: #fff; font-size: 9px; overflow: hidden; }
.combo input { flex: 1; padding-left: 5px; color: #222; }
.combo button { width: 24px; border-left: 1px solid #d9d6d3; background: #f6f5f4; display: flex; align-items: center; justify-content: center; }
.combo i, .expand i { border-width: 4px 4px 0; }
.font { width: 137px; }
.font input { font-style: italic; }
.size { width: 67px; margin-left: 5px; }
.name { width: 107px; }

/* main area */
.body { display: flex; flex: 1; min-height: 0; }
.work { display: flex; flex: 1; flex-direction: column; min-width: 0; border-right: 1px solid #cfcecc; }
.formula { display: flex; flex: none; align-items: center; height: 30px; padding: 1px 0 3px 3px; }
.fbtn { display: flex; align-items: center; width: 16px; }
.fbtn svg { flex: none; width: 14px; height: 14px; }
.name + .fbtn { margin-left: 7px; }
.sum { width: 24px; gap: 3px; }
.eq { justify-content: center; font-size: 14px; font-weight: 600; line-height: 14px; }
.line { flex: 1; height: 18px; background: #fff; border: 1px solid #d9d8d6; }
.expand { display: flex; width: 15px; padding-right: 3px; justify-content: center; }

.view { display: grid; flex: 1; min-height: 0; grid-template: minmax(0, 1fr) 10px / minmax(0, 1fr) 10px; background: #cdcdcd; }
.sheet { overflow: hidden; background: #fff; }
.vscroll { display: flex; flex-direction: column; align-items: center; padding-top: 1px; gap: 2px; }
.vscroll .mark { width: 6px; height: 1px; background: #333; }
.vscroll .thumb { width: 6px; height: 48%; border-radius: 3px; background: #7f7f7f; }
.hscroll { display: flex; align-items: center; justify-content: space-between; padding: 0 1px 0 2px; }
.hscroll .thumb { width: 47%; height: 6px; border-radius: 3px; background: #7f807e; }
.hscroll .mark { width: 1px; height: 7px; background: #333; }

table { width: 100%; table-layout: fixed; border-collapse: separate; border-spacing: 0; }
.c0 { width: 22px; } .ca { width: 29px; } .cb { width: 105px; } .cc { width: 95px; } .cd { width: 76px; }
.cf { width: 77px; } .cg { width: 76px; } .ch { width: 86px; } .ci { width: 41px; } .cj { width: 42px; }
th, td { padding: 0; text-align: center; vertical-align: middle; line-height: 9px; overflow: hidden; white-space: nowrap; }
th { background: #dfdfde; border: solid #bdbcba; border-width: 0 1px 1px 0; font-weight: normal; }
thead th { height: 14px; border-top: 1px solid #c4c3c1; }
.corner { background: #f0efee; }
.sel { background: #3584e4; border-color: #3584e4; color: #fff; font-weight: bold; }
.r1 { height: 9px; } .r2 { height: 36px; } .r3 { height: 19px; } .r4 { height: 27px; } .r5 { height: 14px; } .r6 { height: 18px; }
.r1 th { line-height: 8px; }
.blank tr { height: 14px; }
.blank tr:nth-child(4n) { height: 13px; }
.cursor { position: relative; overflow: visible; border: solid #3584e4; border-width: 0 1px 1px 0; }
.handle { position: absolute; right: -2px; bottom: -2px; width: 4px; height: 4px; background: #3584e4; }
.title, .subtitle, .head { font-family: Lato, sans-serif; color: #fff; }
.title { background: #0f766e; font-size: 12px; font-weight: bold; line-height: 14px; }
.subtitle { background: #14b8a6; border-bottom: 1px solid #b5dcd8; font-size: 9px; font-style: italic; padding-bottom: 1px; }
.head { background: #0f766e; border-right: 1px solid #b5dcd8; font-size: 9px; font-weight: bold; padding-bottom: 3px; }

/* spelling marks */
u {
  text-decoration: none;
  background:
    repeating-linear-gradient(90deg, #c42a2a 0 2px, #c42a2a55 2px 4px) 0 100% / 100% 1px no-repeat,
    repeating-linear-gradient(90deg, #c42a2a55 0 2px, #c42a2a 2px 4px) 0 calc(100% - 1px) / 100% 1px no-repeat;
}
.legend u { background: repeating-linear-gradient(90deg, #e0404a 0 2px, #e0404a66 2px 4px) 0 100% / 100% 1px no-repeat; }
.legend { position: relative; font: italic 8px Lato, sans-serif; color: #8d9bb0; text-align: left; }
.clip { display: flex; align-items: center; height: 17px; overflow: hidden; line-height: 9px; }
.more { position: absolute; right: 1px; top: 6px; border-width: 3px 0 3px 3px; border-color: transparent transparent transparent #111; }

/* sheet tabs */
.tabs { display: flex; flex: none; height: 16px; border-bottom: 1px solid #cfcecc; }
.navs { display: flex; gap: 1px; padding-left: 5px; }
.navs svg { display: block; width: 14px; height: 14px; }
.add { width: 18px; margin: 0 2px 0 9px; }
.add svg { display: block; width: 16px; height: 16px; }
.tab { padding: 0 10px; line-height: 14px; background: linear-gradient(#bbb, #bbb) right center / 1px 8px no-repeat; }
.current { padding: 0 9px; background: #fff; border-bottom: 2px solid #8b8a88; font-weight: bold; }

/* side bar */
.sidebar { position: relative; display: flex; flex: none; flex-direction: column; align-items: center; gap: 13px; width: 38px; padding-top: 8px; }
.sidebar button { display: flex; }
.sidebar svg { width: 16px; height: 16px; }
.grip { position: absolute; left: -1px; top: 269px; width: 4px; height: 50px; background: #979696; }
.grip::after { content: ""; position: absolute; left: 1px; top: 24px; width: 2px; height: 2px; background: #fff; }

/* status bar */
.status { display: grid; flex: none; height: 17px; grid-template-columns: 20px 165fr 164fr 241fr 175fr 46px 31px 20px 19px 190fr 129px; align-items: center; }
.cell { display: flex; align-items: center; height: 13px; padding-left: 7px; border-right: 1px solid #e0dfdd; white-space: nowrap; }
.mid { justify-content: center; padding-left: 4px; }
.disk { padding-left: 6px; }
.disk svg { width: 12px; height: 12px; }
.mode svg { width: 20px; height: 12px; }
.zoom { padding-left: 5px; border: 0; }
.zoom button svg { display: block; width: 8px; height: 8px; }
.zoom input { appearance: none; width: 65px; height: 10px; margin: 0 3px; background: linear-gradient(#8b8a88, #8b8a88) center / 100% 1px no-repeat; }
.zoom input::-webkit-slider-thumb { appearance: none; width: 3px; height: 7px; border: 1px solid #444; background: #f6f5f4; }
.pct { margin-left: 10px; }
```
